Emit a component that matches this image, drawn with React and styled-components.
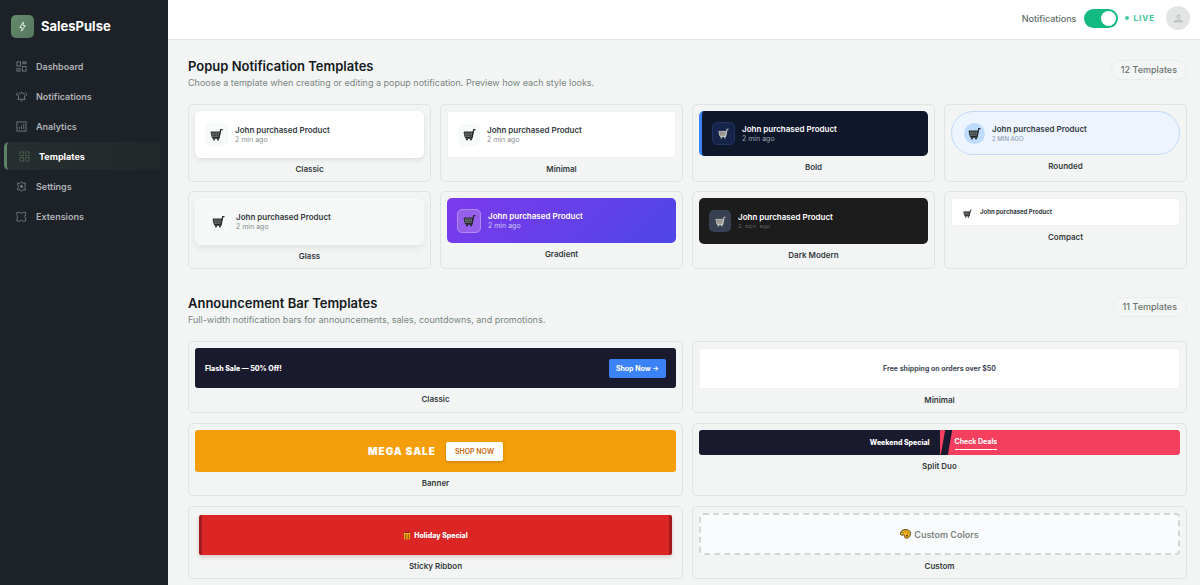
import React from "react";
import styled, { createGlobalStyle, css } from "styled-components";

const GlobalStyle = createGlobalStyle`
  *, *::before, *::after { box-sizing: border-box; }
  body {
    margin: 0;
    background: #f2f5f4;
    color: #1a1f24;
    font-family: Inter, "Liberation Sans", sans-serif;
    font-size: 10px;
  }
  h1, h2, h3, p { margin: 0; }
  a { color: inherit; text-decoration: none; }
  button { font-family: inherit; border: 0; cursor: pointer; }
`;

const Shell = styled.div`
  display: flex;
  min-height: 100vh;
`;

/* ---------- Sidebar ---------- */

const Sidebar = styled.aside`
  flex: 0 0 168px;
  padding: 15px 8px 12px 4px;
  background: #1d2128;
`;

const Brand = styled.a`
  display: flex;
  align-items: center;
  gap: 7px;
  padding-left: 7px;
  margin-bottom: 14px;
  color: #fff;
  font-size: 13px;
  line-height: 23px;
  font-weight: 700;
`;

const BrandMark = styled.span`
  display: grid;
  place-items: center;
  width: 23px;
  height: 23px;
  border-radius: 5px;
  background: linear-gradient(135deg, #658a6d, #56775e);
  color: #e6f2e8;
`;

const Nav = styled.nav`
  display: flex;
  flex-direction: column;
  gap: 2px;
`;

const NavLink = styled.a`
  display: flex;
  align-items: center;
  gap: 9px;
  height: 28px;
  padding-left: 12px;
  border-radius: 5px;
  color: #b0b4b7;
  font-size: 9px;
  font-weight: 600;

  svg { color: #757a80; }

  ${(p) =>
    p.$active &&
    css`
      border-left: 3px solid #5f8267;
      background: linear-gradient(90deg, #262e2f, #20282a);
      color: #fff;
      font-weight: 700;
      svg { color: #4b5b50; }
    `}
`;

/* ---------- Top bar ---------- */

const Page = styled.div`
  flex: 1;
  min-width: 0;
`;

const TopBar = styled.header`
  display: flex;
  align-items: center;
  justify-content: flex-end;
  height: 40px;
  padding: 0 10px 3px 20px;
  background: #fff;
  border-bottom: 1px solid #dfe4e2;
`;

const ToggleLabel = styled.label`
  display: flex;
  align-items: center;
  gap: 8px;
  color: #5f6c66;
  font-size: 9px;
  font-weight: 500;
`;

const Toggle = styled.input`
  appearance: none;
  display: flex;
  align-items: center;
  justify-content: flex-start;
  width: 34px;
  height: 19px;
  margin: 0;
  padding: 2px;
  border-radius: 10px;
  background: #c5ccc9;
  cursor: pointer;

  &::before {
    content: "";
    width: 15px;
    height: 15px;
    border-radius: 50%;
    background: #fff;
  }
  &:checked {
    justify-content: flex-end;
    background: #12b981;
  }
`;

const Live = styled.span`
  display: flex;
  align-items: center;
  gap: 4px;
  margin: 0 11px 0 7px;
  color: #3cc495;
  font-size: 8px;
  font-weight: 700;
  letter-spacing: 1px;

  &::before {
    content: "";
    width: 4px;
    height: 4px;
    border-radius: 50%;
    background: #4cc99f;
  }
`;

const Avatar = styled.button`
  display: grid;
  place-items: center;
  width: 24px;
  height: 24px;
  padding: 0;
  border-radius: 50%;
  background: #e2e5e3;
  color: #a0a8a4;
`;

/* ---------- Sections ---------- */

const Main = styled.main`
  display: flex;
  flex-direction: column;
  gap: 25px;
  padding: 17px 13px 6px 20px;
`;

const SectionHead = styled.div`
  display: flex;
  align-items: flex-start;
  justify-content: space-between;
  margin-bottom: 14px;
`;

const SectionTitle = styled.h2`
  color: #14191d;
  font-size: 13px;
  line-height: 18px;
  font-weight: 600;
`;

const SectionText = styled.p`
  color: #7a8580;
  font-size: 9px;
  line-height: 15px;
`;

const CountPill = styled.span`
  margin-top: 3px;
  padding: 0 9px;
  border: 1px solid #e9edeb;
  border-radius: 10px;
  background: #f4f6f5;
  color: #6a756f;
  font-size: 9px;
  line-height: 18px;
  font-weight: 500;
`;

const Grid = styled.div`
  display: grid;
  grid-template-columns: repeat(${(p) => p.$columns}, minmax(0, 1fr));
  gap: ${(p) => p.$rowGap}px 9px;
`;

const Card = styled.article`
  padding: 6px;
  border: 1px solid #e0e5e3;
  border-radius: 5px;
  background: #f3f5f4;
`;

const CardName = styled.h3`
  margin-top: 5px;
  color: #343b40;
  font-size: 8px;
  line-height: 12px;
  font-weight: 600;
  text-align: center;
`;

/* ---------- Popup previews ---------- */

const popupLooks = {
  classic: css`
    height: 47px;
    background: #fff;
    border-radius: 6px;
    box-shadow: 0 2px 5px rgba(20, 40, 30, 0.1);
  `,
  minimal: css`
    height: 47px;
    background: #fff;
    border: 1px solid #eff2f1;
    border-radius: 3px;
  `,
  bold: css`
    height: 45px;
    padding-left: 10px;
    background: #0f172a;
    border-left: 3px solid #3b82f6;
    border-radius: 5px;
  `,
  rounded: css`
    height: 44px;
    padding-left: 12px;
    background: #edf4fe;
    border: 1px solid #c3dbf8;
    border-radius: 22px;
  `,
  glass: css`
    height: 47px;
    padding-left: 11px;
    background: #f5f8f6;
    border: 1px solid #f7faf8;
    border-radius: 6px;
    box-shadow: 0 3px 7px rgba(20, 40, 30, 0.08);
  `,
  gradient: css`
    height: 45px;
    background: linear-gradient(135deg, #7c3aed, #4f46e5);
    border-radius: 5px;
  `,
  dark: css`
    height: 46px;
    background: #1c1c1c;
    border-radius: 5px;
  `,
  compact: css`
    height: 28px;
    background: #fff;
    border: 1px solid #eff2f1;
    border-radius: 4px;
  `,
};

const Popup = styled.div`
  display: flex;
  align-items: center;
  gap: ${(p) => p.$gap}px;
  padding: 0 10px;
  ${(p) => popupLooks[p.$look]}
`;

const IconTile = styled.span`
  display: grid;
  place-items: center;
  flex: none;
  width: ${(p) => p.$size}px;
  height: ${(p) => p.$size}px;
  border: 1px solid ${(p) => p.$line || "transparent"};
  border-radius: ${(p) => (p.$round ? "50%" : "5px")};
  background: ${(p) => p.$fill || "transparent"};
`;

const PopupTitle = styled.p`
  color: ${(p) => p.$color || "#343a40"};
  font-size: ${(p) => (p.$small ? 6 : 8)}px;
  line-height: 10px;
  font-weight: ${(p) => (p.$small ? 700 : 600)};
`;

const PopupTime = styled.p`
  color: ${(p) => p.$color || "#8a918e"};
  font-size: 7px;
  line-height: 9px;
  ${(p) =>
    p.$variant === "caps" &&
    css`
      font-size: 6px;
      text-transform: uppercase;
      letter-spacing: 0.5px;
      letter-spacing: normal;
      font-weight: 500;
    `}
  ${(p) =>
    p.$variant === "mono" &&
    css`
      font-family: "Liberation Mono", monospace;
      font-size: 6px;
    `}
`;

/* ---------- Bar previews ---------- */

const barLooks = {
  classic: css`
    justify-content: space-between;
    height: 40px;
    padding: 0 10px;
    border-radius: 3px;
    background: #1a1a2e;
  `,
  minimal: css`
    height: 41px;
    border: 1px solid #eff2f1;
    border-radius: 2px;
    background: #fff;
  `,
  banner: css`
    gap: 10px;
    height: 42px;
    border-radius: 3px;
    background: #f59e0b;
  `,
  ribbon: css`
    gap: 3px;
    height: 40px;
    margin: 2px 4px 0;
    border-radius: 2px;
    background: #dc2626;
    border: solid #a31a1c;
    border-width: 0 3px;
    box-shadow: 0 2px 4px rgba(120, 20, 20, 0.2);
  `,
  custom: css`
    gap: 3px;
    height: 42px;
    border: 2px dashed #d3d8d6;
    border-radius: 4px;
    background: #f9fbfc;
  `,
};

const Bar = styled.div`
  display: flex;
  align-items: center;
  justify-content: center;
  ${(p) => barLooks[p.$look]}
`;

const BarText = styled.p`
  color: ${(p) => p.$color || "#fff"};
  font-size: ${(p) => p.$size || 7}px;
  line-height: 13px;
  font-weight: ${(p) => p.$weight || 800};
  letter-spacing: ${(p) => (p.$wide ? "1px" : "normal")};
`;

const BlueButton = styled.button`
  height: 19px;
  padding: 0 7px;
  border-radius: 2px;
  background: #3b82f6;
  color: #fff;
  font-size: 7px;
  font-weight: 700;
`;

const WhiteButton = styled.button`
  height: 19px;
  padding: 0 9px;
  border-radius: 2px;
  background: #fff;
  color: #c4690d;
  font-size: 7px;
  font-weight: 600;
  box-shadow: 0 1px 3px rgba(90, 50, 0, 0.3);
`;

const SplitBar = styled.div`
  display: grid;
  grid-template-columns: 1fr 1fr;
  height: 25px;
  border-radius: 3px;
  overflow: hidden;
`;

const SplitLeft = styled.div`
  display: flex;
  align-items: center;
  justify-content: flex-end;
  padding-right: 10px;
  background: #1a1a2e;
`;

const SplitRight = styled.div`
  position: relative;
  display: flex;
  align-items: center;
  padding-left: 15px;
  background: #f43f5e;

  &::before {
    content: "";
    position: absolute;
    inset: 0 auto 0 3px;
    width: 7px;
    background: #1a1a2e;
    transform: skewX(-10deg);
  }
`;

const DealLink = styled.a`
  border-bottom: 1px solid #fff;
  color: #fff;
  font-size: 7px;
  line-height: 14px;
  font-weight: 700;
`;

/* ---------- Icons ---------- */

const Glyph = ({ size = 11, stroke = 2, children }) => (
  <svg
    width={size}
    height={size}
    viewBox="0 0 24 24"
    fill="none"
    stroke="currentColor"
    strokeWidth={stroke}
    aria-hidden="true"
  >
    {children}
  </svg>
);

const DashboardIcon = () => (
  <Glyph>
    <rect x="2" y="2" width="8" height="9" />
    <rect x="15" y="2" width="7" height="4" />
    <rect x="2" y="17" width="7" height="5" />
    <rect x="14" y="12" width="8" height="10" />
  </Glyph>
);
const BellIcon = () => (
  <Glyph>
    <path d="M3 18h18M5.500 18v-8c0-4 3-6 6.500-6s6.500 2 6.500 6v8M12 4V1.500M10 21.500h4M1 10c0-3 1-5 3-7M23 10c0-3-1-5-3-7" />
  </Glyph>
);
const AnalyticsIcon = () => (
  <Glyph>
    <rect x="2" y="2" width="20" height="20" />
    <path d="M7 18v-5M12 18v-8M17 18V6" />
  </Glyph>
);
const TemplatesIcon = () => (
  <Glyph>
    <rect x="2" y="2" width="8" height="8" />
    <rect x="14" y="2" width="8" height="8" />
    <rect x="2" y="14" width="8" height="8" />
    <rect x="14" y="14" width="8" height="8" />
  </Glyph>
);
const SettingsIcon = () => (
  <Glyph>
    <path d="M12 1l3 4 6-.5-2 7.500 2 7.500-6-.5-3 4-3-4-6 .5 2-7.500-2-7.500 6 .5z" />
    <circle cx="12" cy="12" r="2.500" fill="currentColor" />
  </Glyph>
);
const ExtensionsIcon = () => (
  <Glyph>
    <path d="M2 3h7c0 3 5 3 5 0h7v6c-3 0-3 5 0 5v8h-7c0-2-5-2-5 0H2v-7c2 0 2-5 0-5z" />
  </Glyph>
);
const BoltIcon = () => (
  <Glyph size={11}>
    <path d="M14 2L6 14h5l-1 8 8-12h-5z" strokeLinejoin="round" />
  </Glyph>
);
const UserIcon = () => (
  <Glyph size={9}>
    <circle cx="12" cy="7" r="4" />
    <path d="M1 21c0-6 22-6 22 0z" />
  </Glyph>
);

const CartIcon = ({ size = 13, ink = "#25292b", basket = "#7d8382" }) => (
  <svg width={size} height={size} viewBox="0 0 26 26" fill="none" aria-hidden="true">
    <path d="M2 8h18l-2 11H4.500z" fill={basket} stroke={ink} strokeWidth="2" />
    <path d="M3 11.500h16M4 15h14.500M7.500 8l1 10M11.500 8v10M15.500 8l-1 10" stroke={ink} strokeWidth="1" />
    <path d="M25 3h-3.500L18 20H5" stroke={ink} strokeWidth="2.500" />
    <circle cx="8" cy="23" r="2" fill={ink} />
    <circle cx="16" cy="23" r="2" fill={ink} />
  </svg>
);

const GiftIcon = () => (
  <svg width="8" height="9" viewBox="0 0 16 18" aria-hidden="true">
    <path d="M8 4C3 4 3 1 5 1s3 3 3 3 1-3 3-3 2 3-3 3z" fill="none" stroke="#4a2410" strokeWidth="1" />
    <rect x="1" y="4" width="14" height="4" fill="#fbb01c" />
    <rect x="2" y="8" width="12" height="9" fill="#f5a012" />
    <path d="M5.500 6v11M10.500 6v11M1 4.500v3M15 4.500v3" stroke="#5e3410" strokeWidth="1.500" />
  </svg>
);

const PaletteIcon = () => (
  <svg width="11" height="10" viewBox="0 0 22 20" aria-hidden="true">
    <path
      d="M11 1C5 1 1 5 1 9c0 3 2 4 5 3 3-1 3 1 3 3 0 3 3 4 6 3 4-1 6-5 6-9 0-5-4-8-10-8z"
      fill="#f5b41c"
      stroke="#4a3a1c"
      strokeWidth="1.800"
    />
    <circle cx="6" cy="7" r="1.500" fill="#3d8a4e" />
    <circle cx="11" cy="4.500" r="1.400" fill="#d3541f" />
    <circle cx="16" cy="8" r="1.400" fill="#7a5a12" />
    <circle cx="14" cy="13.500" r="2" fill="#5b4316" />
  </svg>
);

/* ---------- Data ---------- */

const navItems = [
  ["Dashboard", DashboardIcon],
  ["Notifications", BellIcon],
  ["Analytics", AnalyticsIcon],
  ["Templates", TemplatesIcon],
  ["Settings", SettingsIcon],
  ["Extensions", ExtensionsIcon],
];

const paleCart = { size: 11, ink: "#c4c6c2", basket: "#77736c" };

const popups = [
  { name: "Classic", look: "classic", tile: { $size: 23, $fill: "#f6fbf8" } },
  { name: "Minimal", look: "minimal", tile: { $size: 22, $fill: "#f6fbf8" } },
  {
    name: "Bold", look: "bold", title: "#fff", time: "#98a1b0", cart: paleCart,
    tile: { $size: 23, $fill: "#172449", $line: "#223362" },
  },
  {
    name: "Rounded", look: "rounded", time: "#8fa0b4", variant: "caps",
    tile: { $size: 21, $fill: "#bfdbfe", $round: true },
  },
  { name: "Glass", look: "glass", tile: { $size: 22, $fill: "#f6faf8" } },
  {
    name: "Gradient", look: "gradient", title: "#fff", time: "#cfc5fa",
    tile: { $size: 24, $fill: "#9660ec", $line: "#b08cf3" },
  },
  {
    name: "Dark Modern", look: "dark", title: "#fff", time: "#62666b", variant: "mono", cart: paleCart,
    tile: { $size: 22, $fill: "#374151" },
  },
  { name: "Compact", look: "compact", gap: 9, compact: true, tile: { $size: 9 }, cart: { size: 9 } },
];

const bars = [
  {
    name: "Classic",
    preview: (
      <Bar $look="classic">
        <BarText>Flash Sale — 50% Off!</BarText>
        <BlueButton type="button">Shop Now →</BlueButton>
      </Bar>
    ),
  },
  {
    name: "Minimal",
    preview: (
      <Bar $look="minimal">
        <BarText $color="#444a58" $weight={700}>Free shipping on orders over $50</BarText>
      </Bar>
    ),
  },
  {
    name: "Banner",
    preview: (
      <Bar $look="banner">
        <BarText $size={10} $weight={900} $wide>MEGA SALE</BarText>
        <WhiteButton type="button">SHOP NOW</WhiteButton>
      </Bar>
    ),
  },
  {
    name: "Split Duo",
    preview: (
      <SplitBar>
        <SplitLeft><BarText>Weekend Special</BarText></SplitLeft>
        <SplitRight><DealLink href="#deals">Check Deals</DealLink></SplitRight>
      </SplitBar>
    ),
  },
  {
    name: "Sticky Ribbon",
    preview: (
      <Bar $look="ribbon">
        <GiftIcon />
        <BarText>Holiday Special</BarText>
      </Bar>
    ),
  },
  {
    name: "Custom",
    preview: (
      <Bar $look="custom">
        <PaletteIcon />
        <BarText $color="#7b8580" $size={9} $weight={600}>Custom Colors</BarText>
      </Bar>
    ),
  },
];

function Section({ title, text, count, columns, rowGap, children }) {
  return (
    <section>
      <SectionHead>
        <div>
          <SectionTitle>{title}</SectionTitle>
          <SectionText>{text}</SectionText>
        </div>
        <CountPill>{count} Templates</CountPill>
      </SectionHead>
      <Grid $columns={columns} $rowGap={rowGap}>{children}</Grid>
    </section>
  );
}

export default function App() {
  return (
    <>
      <GlobalStyle />
      <Shell>
        <Sidebar>
          <Brand href="#home">
            <BrandMark><BoltIcon /></BrandMark>
            SalesPulse
          </Brand>
          <Nav aria-label="Main">
            {navItems.map(([label, Icon]) => (
              <NavLink key={label} href={`#${label.toLowerCase()}`} $active={label === "Templates"}>
                <Icon />
                {label}
              </NavLink>
            ))}
          </Nav>
        </Sidebar>
        <Page>
          <TopBar>
            <ToggleLabel>
              Notifications
              <Toggle type="checkbox" role="switch" defaultChecked />
            </ToggleLabel>
            <Live>LIVE</Live>
            <Avatar type="button" aria-label="Account"><UserIcon /></Avatar>
          </TopBar>
          <Main>
            <Section
              title="Popup Notification Templates"
              text="Choose a template when creating or editing a popup notification. Preview how each style looks."
              count={12}
              columns={4}
              rowGap={9}
            >
              {popups.map((p) => (
                <Card key={p.name}>
                  <Popup $look={p.look} $gap={p.gap || 7}>
                    <IconTile {...p.tile}><CartIcon {...p.cart} /></IconTile>
                    <div>
                      <PopupTitle $color={p.title} $small={p.compact}>John purchased Product</PopupTitle>
                      {!p.compact && <PopupTime $color={p.time} $variant={p.variant}>2 min ago</PopupTime>}
                    </div>
                  </Popup>
                  <CardName>{p.name}</CardName>
                </Card>
              ))}
            </Section>
            <Section
              title="Announcement Bar Templates"
              text="Full-width notification bars for announcements, sales, countdowns, and promotions."
              count={11}
              columns={2}
              rowGap={10}
            >
              {bars.map((b) => (
                <Card key={b.name}>
                  {b.preview}
                  <CardName>{b.name}</CardName>
                </Card>
              ))}
            </Section>
          </Main>
        </Page>
      </Shell>
    </>
  );
}
